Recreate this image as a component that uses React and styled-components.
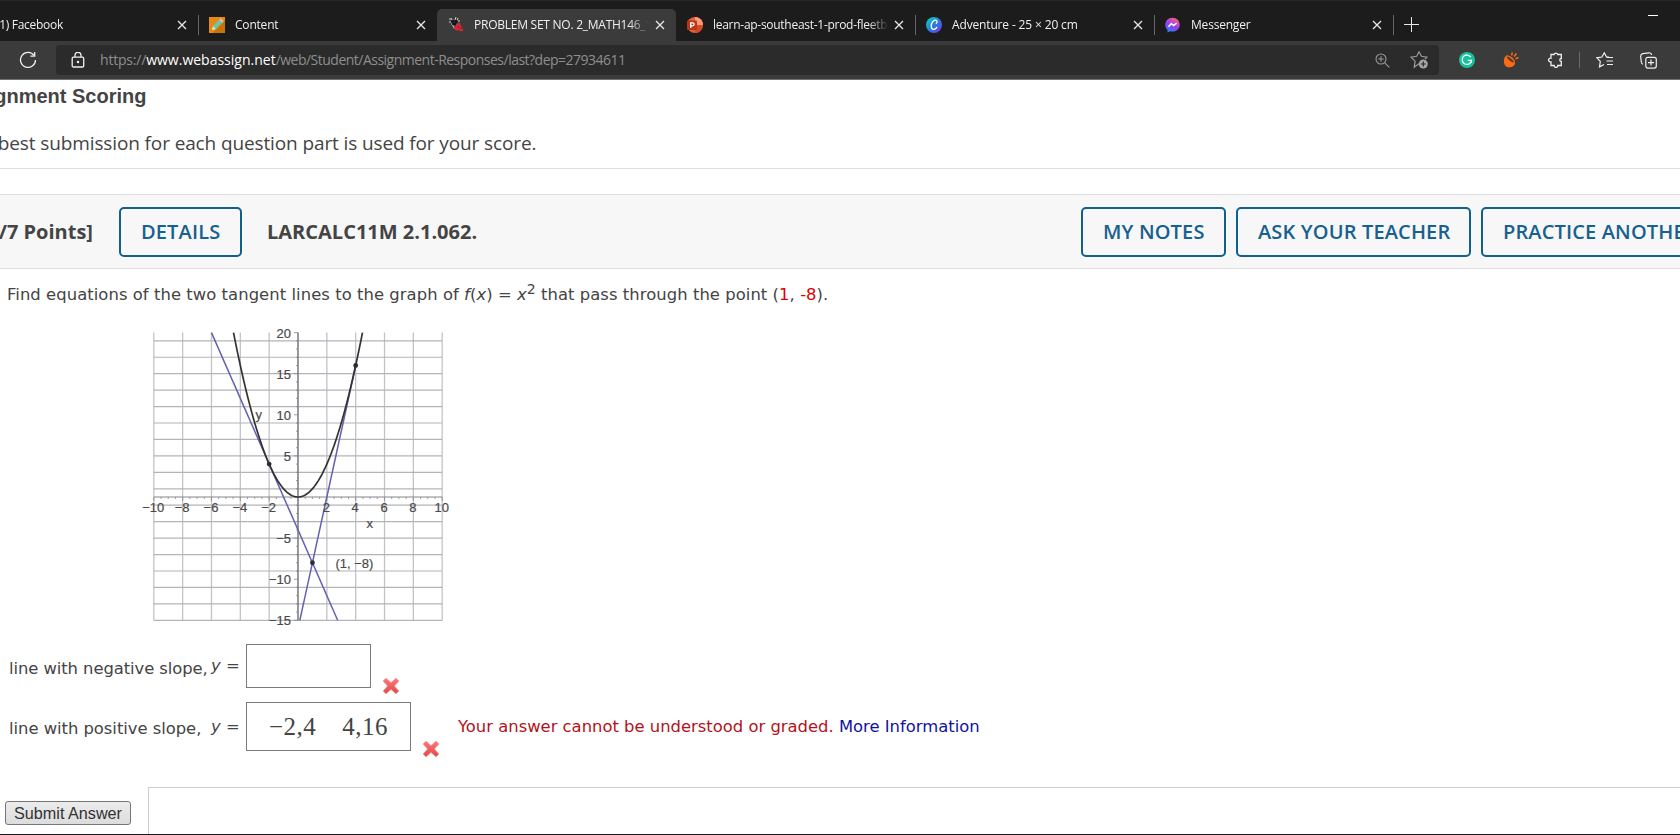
import React from 'react'
import styled, { createGlobalStyle } from 'styled-components'

const tabs = [
  { title: '(1) Facebook', spacing: '-0.3px' },
  { title: 'Content', icon: 'pencil', spacing: '-0.2px' },
  { title: 'PROBLEM SET NO. 2_MATH146_1', icon: 'webassign', active: true, spacing: '-0.25px' },
  { title: 'learn-ap-southeast-1-prod-fleetb', icon: 'powerpoint', spacing: '-0.28px' },
  { title: 'Adventure - 25 × 20 cm', icon: 'canva', spacing: '-0.15px' },
  { title: 'Messenger', icon: 'messenger', spacing: '-0.2px' },
]

const TabIcon = ({ name }) => {
  switch (name) {
    case 'pencil':
      return (
        <svg width="16" height="16" viewBox="0 0 16 16">
          <rect width="16" height="16" fill="#e8890f" />
          <path d="M16 3v13H4z" fill="#c87208" />
          <path d="M3 13l1-4 7-7 3 3-7 7z" fill="#7ed3b8" />
          <path d="M5 9.5l6-6M6.500 11l6-6" stroke="#3f9d8c" strokeWidth=".8" />
          <path d="M10.500 2.500l1.200-1.200 3 3-1.200 1.200z" fill="#f0b7c4" />
          <path d="M3 13l1-3.600 2.600 2.600z" fill="#f5e3c4" />
        </svg>
      )
    case 'webassign':
      return (
        <svg width="16" height="16" viewBox="0 0 16 16">
          <path d="M1 2h2M3 1l1 2M8 0l-1 3M10 1L9 4M1 5h2M10 4h2M3 7h2M7 6l1 2" stroke="#cfcfcf" strokeWidth="1" />
          <path d="M3 3.500h3v2H3zM6.500 3h3v3h-3zM4 6h4v2H4z" fill="#151515" />
          <path d="M4.500 8l2 3.500" stroke="#b9b9b9" strokeWidth="1.200" />
          <path d="M11 5L15.500 14H12l-2-1-2 .5-2-2.500 2.500-3z" fill="#dc2733" />
          <path d="M10.500 8.500l1 2h-2zM12 11h1.500v1H12z" fill="#7d1118" />
        </svg>
      )
    case 'powerpoint':
      return (
        <svg width="16" height="16" viewBox="0 0 16 16">
          <circle cx="8" cy="8" r="8" fill="#e2603e" />
          <path d="M8 0a8 8 0 0 1 8 8H8z" fill="#ff9a78" />
          <path d="M8 8h8a8 8 0 0 1-8 8z" fill="#d14b2a" />
          <rect y="3.500" width="10" height="9.500" rx="1" fill="#bb3516" />
          <path d="M3.700 11V5.800h1.900a1.500 1.500 0 0 1 0 3H3.700" stroke="#fff" strokeWidth="1.300" fill="none" />
        </svg>
      )
    case 'canva':
      return (
        <svg width="16" height="16" viewBox="0 0 16 16">
          <defs>
            <linearGradient id="canva" x1="0" y1="0" x2="1" y2="1">
              <stop offset="0.15" stopColor="#12bfca" />
              <stop offset="0.5" stopColor="#2a80de" />
              <stop offset="1" stopColor="#7a2ae8" />
            </linearGradient>
          </defs>
          <circle cx="8" cy="8" r="8" fill="url(#canva)" />
          <path d="M10.300 6.200c1.200-1 1-3-.8-3-2.500 0-4.300 3.300-4.300 5.900 0 3.800 3.600 4.300 5.600 1.300" stroke="#fff" strokeWidth="1.300" fill="none" strokeLinecap="round" />
        </svg>
      )
    case 'messenger':
      return (
        <svg width="16" height="16" viewBox="0 0 16 16">
          <defs>
            <linearGradient id="messenger" x1="0.2" y1="1" x2="0.7" y2="0">
              <stop offset="0" stopColor="#1a8cff" />
              <stop offset="0.5" stopColor="#9a3cf5" />
              <stop offset="1" stopColor="#ff6277" />
            </linearGradient>
          </defs>
          <path d="M7.500.8C3.300.8.300 3.900.300 7.800c0 2 .8 3.700 2.200 4.900V15.500l2.600-1.300c.8.200 1.600.300 2.400.300 4.200 0 7.200-3 7.200-6.800S11.700.8 7.500.8z" fill="url(#messenger)" />
          <path d="M3.500 9.700L6.300 6.500l2.300 2 3-2.400" stroke="#fff" strokeWidth="1.500" fill="none" />
        </svg>
      )
    default:
      return null
  }
}

const CloseIcon = () => (
  <svg width="10" height="10" viewBox="0 0 10 10">
    <path d="M1 1l8 8M9 1L1 9" stroke="#e8e8e8" strokeWidth="1.300" />
  </svg>
)

const WrongIcon = () => (
  <svg width="18" height="18" viewBox="0 0 18 18">
    <defs>
      <linearGradient id="wrong" x1="0" y1="0" x2="0" y2="1">
        <stop offset="0" stopColor="#fb7b77" />
        <stop offset="1" stopColor="#e2474b" />
      </linearGradient>
    </defs>
    <path d="M4 1.200L9 5.700l5-4.500 2.800 2.800L12.400 9l4.400 5-2.800 2.800L9 12.400l-5 4.400L1.200 14l4.400-5L1.200 4z" fill="url(#wrong)" stroke="#f58c8a" strokeWidth=".8" strokeLinejoin="round" />
  </svg>
)

// plot area: x from -10 to 10, y from -15 to 20
const toX = (x) => 164 + x * 14.42
const toY = (y) => 182 - y * 8.22

const evens = [-10, -8, -6, -4, -2, 2, 4, 6, 8, 10]
const odds = Array.from({ length: 18 }, (_, i) => 19 - i * 2)
const yLabels = [20, 15, 10, 5, -5, -10, -15]
const unitsY = Array.from({ length: 36 }, (_, i) => 20 - i)
const unitsX = Array.from({ length: 41 }, (_, i) => -10 + i * 0.5)
const parabola = Array.from({ length: 91 }, (_, i) => {
  const x = -4.472 + (i * 8.944) / 90
  return `${toX(x).toFixed(2)},${toY(x * x).toFixed(2)}`
}).join(' ')

const label = (n) => String(n).replace('-', '−')

const Graph = () => (
  <Plot width="330" height="320" viewBox="0 0 330 320">
    {evens.map((x) => (
      <line key={x} x1={toX(x)} x2={toX(x)} y1={toY(20)} y2={toY(-15)} stroke="#c3c3ca" strokeWidth="1.300" />
    ))}
    {odds.map((y) => (
      <line key={y} x1={toX(-10)} x2={toX(10)} y1={toY(y)} y2={toY(y)} stroke="#b4b4b8" strokeWidth="1.200" />
    ))}
    <line x1={toX(0)} x2={toX(0)} y1={toY(20)} y2={toY(-15)} stroke="#77777c" strokeWidth="1.500" />
    <line x1={toX(-10)} x2={toX(10)} y1={toY(0)} y2={toY(0)} stroke="#88888c" strokeWidth="1.200" />
    {unitsY.map((y) => (
      <line key={y} x1={toX(0) - (y % 5 ? 2 : 4)} x2={toX(0)} y1={toY(y)} y2={toY(y)} stroke="#888" strokeWidth=".8" />
    ))}
    {unitsX.map((x) => (
      <line key={x} x1={toX(x)} x2={toX(x)} y1={toY(0)} y2={toY(0) + (x % 2 ? 2 : 4)} stroke="#888" strokeWidth=".8" />
    ))}
    <line x1={toX(-6)} y1={toY(20)} x2={toX(2.75)} y2={toY(-15)} stroke="#6460b0" strokeWidth="1.500" />
    <line x1={toX(4)} y1={toY(16)} x2={toX(0.125)} y2={toY(-15)} stroke="#6460b0" strokeWidth="1.500" />
    <polyline points={parabola} fill="none" stroke="#333" strokeWidth="1.700" />
    <circle cx={toX(-2)} cy={toY(4)} r="2.400" fill="#2c2c34" />
    <circle cx={toX(4)} cy={toY(16)} r="2.400" fill="#2c2c34" />
    <circle cx={toX(1)} cy={toY(-8)} r="2.400" fill="#2c2c34" />
    {yLabels.map((y) => (
      <text key={y} x="157" y={toY(y) + 5} textAnchor="end">{label(y)}</text>
    ))}
    {evens.map((x) => (
      <text key={x} x={toX(x) - 0.5} y="196.500" textAnchor="middle">{label(x)}</text>
    ))}
    <text x="121.500" y="104">y</text>
    <text x="232.500" y="212.500">x</text>
    <text x="201.500" y="253">(1, −8)</text>
  </Plot>
)

const App = () => {
  return (
    <Screen>
      <GlobalStyle />
      <TabBar>
        {tabs.map((tab, i) => (
          <Tab key={tab.title} $active={tab.active} $divider={!tab.active && i !== 3 && i !== 0}>
            <TabIconBox><TabIcon name={tab.icon} /></TabIconBox>
            <TabTitle $spacing={tab.spacing}>{tab.title}</TabTitle>
            <CloseIcon />
          </Tab>
        ))}
        <NewTab>
          <svg width="15" height="15" viewBox="0 0 15 15">
            <path d="M7.500 0v15M0 7.500h15" stroke="#e8e8e8" strokeWidth="1" />
          </svg>
        </NewTab>
        <Minimize />
      </TabBar>

      <Toolbar>
        <Reload>
          <svg width="18" height="18" viewBox="0 0 18 18" fill="none" stroke="#eee" strokeWidth="1.300">
            <path d="M15.200 4.700A7.500 7.500 0 1 0 16.500 9" />
            <path d="M15.700 1v4.200h-4.300" />
          </svg>
        </Reload>
        <AddressBar>
          <svg width="14" height="16" viewBox="0 0 14 16" fill="none" stroke="#f0f0f0" strokeWidth="1.300">
            <rect x="1.200" y="5.200" width="11.500" height="9.800" rx="1.200" />
            <path d="M4 5V3.300a3 3 0 0 1 6 0V5" />
            <circle cx="7" cy="10" r=".6" fill="#fff" />
          </svg>
          <Url>
            <UrlPart $spacing="-0.2px">https://</UrlPart>
            <UrlPart $bright>www.webassign.net</UrlPart>
            <UrlPart $spacing="-0.51px">/web/Student/Assignment-Responses/last?dep=27934611</UrlPart>
          </Url>
          <AddressActions>
            <svg width="15" height="15" viewBox="0 0 15 15" fill="none" stroke="#9a9a9a" strokeWidth="1.100">
              <circle cx="6" cy="6" r="5" />
              <path d="M9.800 9.800L14.300 14.300M6 3.300v5.400M3.300 6h5.400" />
            </svg>
            <svg width="18" height="18" viewBox="0 0 18 18" fill="none" stroke="#9a9a9a" strokeWidth="1.200">
              <path d="M9 12.700l-4.800 3.400.9-5.900L1 6.100l5.700-.8L9 .8l2.500 4.500 5.500.8-2 2" />
              <circle cx="13.300" cy="13" r="4.500" fill="#a6a6a6" stroke="none" />
              <path d="M13.300 10.500v5M10.800 13h5" stroke="#2b2b2b" />
            </svg>
          </AddressActions>
        </AddressBar>
        <Extensions>
          <svg width="16" height="16" viewBox="0 0 16 16">
            <circle cx="8" cy="8" r="8" fill="#15c39a" />
            <path d="M11.800 5.200A4.700 4.700 0 1 0 12.500 8.300H8.800M12.300 8.300v2.800" stroke="#fff" strokeWidth="1.300" fill="none" />
          </svg>
          <svg width="16" height="16" viewBox="0 0 16 16">
            <path d="M2.300 4.500C-.3 8 .5 15.300 6 15.300c4 0 6.300-2.500 6-5z" fill="#ff6a13" />
            <ellipse cx="7.200" cy="7.400" rx="5.700" ry="2.700" transform="rotate(38 7.200 7.400)" fill="#ff6a13" />
            <ellipse cx="7.300" cy="7.500" rx="4.300" ry="1.200" transform="rotate(38 7.300 7.500)" fill="#54402f" />
            <path d="M8.600 3.500l.7-3M11 4.500l2.500-3M12.500 6.700l3-1.200" stroke="#ff6a13" strokeWidth="1.500" />
          </svg>
          <svg width="16" height="16" viewBox="0 0 16 16" fill="none" stroke="#f0f0f0" strokeWidth="1.300">
            <path d="M4 2.500h3a1.900 1.900 0 0 1 3.700 0h3.600v4a1.500 1.500 0 0 0 0 3v4h-3.500a1.900 1.900 0 0 1-3.800 0H4V10a2 2 0 1 1 0-3.900z" />
          </svg>
        </Extensions>
        <ToolbarDivider />
        <Collections>
          <svg width="17" height="16" viewBox="0 0 17 16" fill="none" stroke="#f0f0f0" strokeWidth="1.200">
            <path d="M13 5.200l-2.600-.4L8.300.8 5.900 5l-5 .8 3.400 3.600-.8 5.500L8 12.500M10.500 5.500H17M10.500 9H17M11 12.500h6" />
          </svg>
          <svg width="17" height="17" viewBox="0 0 17 17" fill="none" stroke="#f0f0f0" strokeWidth="1.200">
            <path d="M3 12.300C1.800 11.800 1.500 11 1.300 10L.7 4.500C.6 3 1.200 2 2.800 1.700L9 .8c1.600-.2 2.400.5 2.700 2" />
            <rect x="5.800" y="5.300" width="10.500" height="10.800" rx="2" />
            <path d="M11 7.500v6M8 10.600h6" />
          </svg>
        </Collections>
      </Toolbar>

      <Page>
        <ScoringPanel>
          <ScoringTitle>Assignment Scoring</ScoringTitle>
          <ScoringText>Your best submission for each question part is used for your score.</ScoringText>
        </ScoringPanel>

        <QuestionHeader>
          <Points>[0/7 Points]</Points>
          <OutlineButton $width={123}>DETAILS</OutlineButton>
          <QuestionCode>LARCALC11M 2.1.062.</QuestionCode>
          <HeaderActions>
            <OutlineButton $width={145}>MY NOTES</OutlineButton>
            <OutlineButton $width={235}>ASK YOUR TEACHER</OutlineButton>
            <OutlineButton $width={235}>PRACTICE ANOTHER</OutlineButton>
          </HeaderActions>
        </QuestionHeader>

        <Question>
          <Prompt>
            Find equations of the two tangent lines to the graph of <i>f</i>(<i>x</i>) = <i>x</i><sup>2</sup> that pass through the point (<Red>1</Red>, <Red>-8</Red>).
          </Prompt>
          <Graph />
          <AnswerRow $height={44}>
            <AnswerLabel $tight>line with negative slope,</AnswerLabel>
            <Equals><i>y</i> =</Equals>
            <AnswerBox $width={125} />
            <Mark><WrongIcon /></Mark>
          </AnswerRow>
          <AnswerRow $height={49}>
            <AnswerLabel>line with positive slope,</AnswerLabel>
            <Equals><i>y</i> =</Equals>
            <AnswerBox $width={165}>
              <span>−2,4</span>
              <span>4,16</span>
            </AnswerBox>
            <Mark><WrongIcon /></Mark>
            <Feedback>
              Your answer cannot be understood or graded. <MoreInfo>More Information</MoreInfo>
            </Feedback>
          </AnswerRow>
        </Question>

        <Footer>
          <SubmitButton>Submit Answer</SubmitButton>
          <FooterPanel />
        </Footer>
      </Page>
      <Taskbar />
    </Screen>
  )
}

export default App


const GlobalStyle = createGlobalStyle`
  * {
    box-sizing: border-box;
  }
  body {
    margin: 0;
    overflow: hidden;
    background: #fff;
  }
  svg {
    display: block;
    flex-shrink: 0;
  }
`;

const Screen = styled.div`
  width: 1680px;
  height: 835px;
  display: flex;
  flex-direction: column;
  overflow: hidden;
  color: #444;
`;

const TabBar = styled.div`
  height: 41px;
  flex-shrink: 0;
  display: flex;
  align-items: flex-end;
  background: #1c1c1c;
  border-top: 1px solid #272727;
  font-family: "Open Sans", "Noto Sans", sans-serif;
  font-size: 12px;
  color: #efefef;
`;

const Tab = styled.div`
  width: 239px;
  height: 32px;
  flex-shrink: 0;
  display: flex;
  align-items: center;
  padding: 0 11px;
  border-radius: 5px 5px 0 0;
  background: ${({ $active }) => ($active ? '#3b3b3b' : 'transparent')};
  background-image: ${({ $divider }) => ($divider ? 'linear-gradient(#666, #666)' : 'none')};
  background-size: 1px 20px;
  background-position: left 6px;
  background-repeat: no-repeat;
  &:first-child {
    margin-left: -41px;
  }
`;

const TabIconBox = styled.div`
  width: 16px;
  height: 16px;
  margin-right: 10px;
  flex-shrink: 0;
`;

const TabTitle = styled.span`
  width: 174px;
  margin-right: 7px;
  line-height: 16px;
  white-space: nowrap;
  overflow: hidden;
  letter-spacing: ${({ $spacing }) => $spacing || '0'};
  mask-image: linear-gradient(to right, #000 155px, transparent 176px);
`;

const NewTab = styled.div`
  height: 32px;
  padding: 8px 11px;
  background: linear-gradient(#666, #666) left 6px / 1px 20px no-repeat;
`;

const Minimize = styled.div`
  width: 10px;
  height: 1px;
  margin: 0 22px 25px auto;
  background: #fff;
`;

const Toolbar = styled.div`
  height: 39px;
  flex-shrink: 0;
  display: flex;
  align-items: center;
  background: #3b3b3b;
  border-bottom: 1px solid #707070;
`;

const Reload = styled.div`
  margin: 0 19px;
`;

const AddressBar = styled.div`
  width: 1383px;
  height: 30px;
  display: flex;
  align-items: center;
  padding: 0 11px 0 15px;
  border-radius: 4px;
  background: #2b2b2b;
`;

const Url = styled.div`
  display: flex;
  margin-left: 15px;
  font-family: "Open Sans", "Noto Sans", sans-serif;
  font-size: 14px;
  line-height: 20px;
`;

const UrlPart = styled.span`
  color: ${({ $bright }) => ($bright ? '#fff' : '#8e8e8e')};
  letter-spacing: ${({ $spacing }) => $spacing || '0'};
`;

const AddressActions = styled.div`
  display: flex;
  align-items: center;
  gap: 20px;
  margin-left: auto;
`;

const Extensions = styled.div`
  display: flex;
  gap: 28px;
  margin-left: 20px;
`;

const ToolbarDivider = styled.div`
  width: 1px;
  height: 16px;
  margin: 0 16px;
  background: #6a6a6a;
`;

const Collections = styled.div`
  display: flex;
  align-items: center;
  gap: 27px;
`;

const Page = styled.main`
  height: 754px;
  display: flex;
  flex-direction: column;
  background: #fff;
`;

const ScoringPanel = styled.section`
  height: 89px;
  flex-shrink: 0;
  border-bottom: 1px solid #ddd;
  white-space: nowrap;
`;

const ScoringTitle = styled.h2`
  margin: 5px 0 0 -48px;
  font: bold 20px/23px "Liberation Sans", Arial, sans-serif;
`;

const ScoringText = styled.p`
  margin: 22px 0 0 -48px;
  font: 19px/26px "Open Sans", "Noto Sans", sans-serif;
  letter-spacing: -0.12px;
`;

const QuestionHeader = styled.header`
  height: 75px;
  flex-shrink: 0;
  display: flex;
  align-items: center;
  margin-top: 25px;
  border: solid #ddd;
  border-width: 1px 0;
  background: #f7f7f7;
  font: bold 20px/26px "Open Sans", "Noto Sans", sans-serif;
  white-space: nowrap;
`;

const Points = styled.div`
  width: 119px;
  padding-right: 26px;
  display: flex;
  justify-content: flex-end;
`;

const OutlineButton = styled.button`
  width: ${({ $width }) => $width}px;
  height: 50px;
  flex-shrink: 0;
  padding: 0 0 0 20px;
  border: 2px solid #0f5f8f;
  border-radius: 5px;
  background: transparent;
  color: #17608f;
  font: 550 20px/26px "Open Sans", "Noto Sans", sans-serif;
  letter-spacing: 0.15px;
  text-align: left;
`;

const QuestionCode = styled.div`
  margin-left: 25px;
`;

const HeaderActions = styled.div`
  display: flex;
  gap: 10px;
  margin-left: auto;
  margin-right: -36px;
`;

const Question = styled.section`
  height: 518px;
  flex-shrink: 0;
  font: 16.4px/24px "DejaVu Sans", Verdana, sans-serif;
  white-space: nowrap;
`;

const Prompt = styled.p`
  height: 24px;
  margin: 14px 0 0 7px;
  letter-spacing: 0.06px;
  sup {
    font-size: 14px;
    line-height: 0;
  }
`;

const Red = styled.span`
  color: #d00;
`;

const Plot = styled.svg`
  margin: 8px 0 9px 134px;
  text {
    fill: #4a4a4a;
    stroke: #4a4a4a;
    stroke-width: 0.2px;
    font: 13px "Liberation Sans", Arial, sans-serif;
  }
`;

const AnswerRow = styled.div`
  height: ${({ $height }) => $height}px;
  display: flex;
  align-items: center;
  padding-left: 9px;
  & + & {
    margin-top: 14px;
  }
`;

const AnswerLabel = styled.span`
  width: 202px;
  padding-top: 5px;
  letter-spacing: ${({ $tight }) => ($tight ? '-0.07px' : '-0.03px')};
`;

const Equals = styled.span`
  width: 35px;
`;

const AnswerBox = styled.div`
  width: ${({ $width }) => $width}px;
  height: 100%;
  display: flex;
  align-items: center;
  justify-content: center;
  gap: 26px;
  border: 1px solid #7b7b7b;
  font: 25px/30px "Liberation Serif", "Times New Roman", serif;
  letter-spacing: 0.5px;
`;

const Mark = styled.div`
  align-self: flex-end;
  margin: 0 18px -7px 11px;
`;

const Feedback = styled.span`
  color: #b5121b;
`;

const MoreInfo = styled.a`
  color: #1111a5;
`;

const Footer = styled.footer`
  flex: 1;
  display: flex;
  align-items: flex-start;
`;

const SubmitButton = styled.button`
  width: 126px;
  height: 24px;
  margin: 14px 17px 0 5px;
  padding: 0;
  border: 1px solid #767676;
  border-radius: 3px;
  background: linear-gradient(#ececec, #dcdcdc);
  color: #333;
  font: 16.2px/20px "Liberation Sans", Arial, sans-serif;
`;

const FooterPanel = styled.div`
  flex: 1;
  height: 100%;
  border: solid #ccc;
  border-width: 1px 0 0 1px;
`;

const Taskbar = styled.div`
  height: 1px;
  flex-shrink: 0;
  background: #1c1820;
`;
